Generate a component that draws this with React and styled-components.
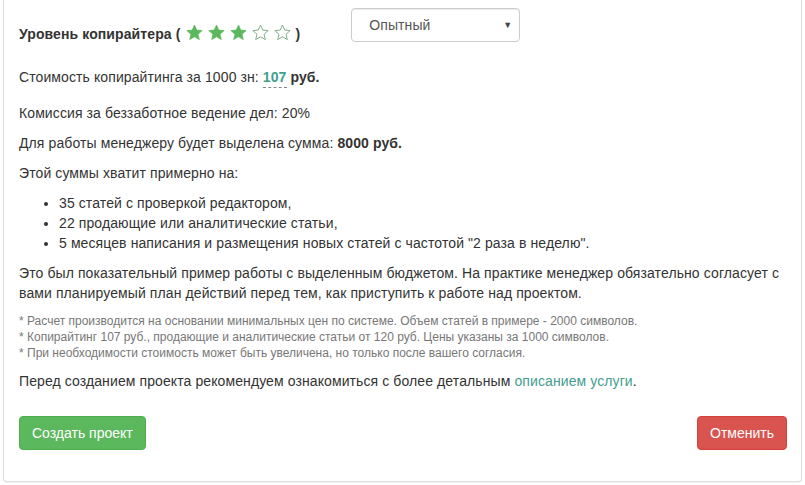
import React from "react";
import styled, { createGlobalStyle } from "styled-components";

const Global = createGlobalStyle`
  html, body { margin: 0; padding: 0; background: #fff; }
  body { font-family: "Liberation Sans", Arial, sans-serif; font-size: 14px; line-height: 20px; color: #333; letter-spacing: 0.1px; }
  * { box-sizing: border-box; }
`;

const Panel = styled.div`
  margin: 0 4px 4px 3px;
  width: 799px;
  border: 1px solid #ddd;
  border-top: 0;
  border-radius: 0 0 4px 4px;
  box-shadow: 0 1px 1px rgba(0,0,0,0.05);
  padding: 8px 14px 31px 15px;
`;

const Header = styled.div`
  display: flex;
  align-items: flex-start;
  gap: 51px;
  margin-bottom: 23px;
`;

const Title = styled.div`
  font-weight: bold;
  padding-top: 16px;
  display: flex;
  align-items: center;
  white-space: nowrap;
`;

const Stars = styled.span`
  display: inline-flex;
  gap: 5px;
  margin: 0 4px 0 6px;
  position: relative;
  top: -2px;
`;

const SelectBox = styled.div`
  width: 169px;
  height: 34px;
  border: 1px solid #ccc;
  border-radius: 4px;
  box-shadow: inset 0 1px 1px rgba(0,0,0,0.075);
  display: flex;
  align-items: center;
  justify-content: space-between;
  padding: 0 7px 0 17px;
  color: #555;
  font-size: 14px;
`;

const Caret = styled.span`
  font-size: 9px;
  color: #444;
`;

const P = styled.p`
  margin: 0 0 ${p => p.$mb ?? 10}px;
`;

const Price = styled.span`
  font-weight: bold;
  color: #3f9e8e;
  border-bottom: 1px dashed #888;
  padding-bottom: 2px;
`;

const List = styled.ul`
  margin: 0 0 10px;
  padding-left: 40px;
  list-style: disc;
`;

const Notes = styled.div`
  font-size: 12px;
  line-height: 16px;
  color: #777;
  letter-spacing: 0;
  margin: 0 0 10px;
`;

const Link = styled.a`
  color: #3f9e8e;
  text-decoration: none;
`;

const Actions = styled.div`
  display: flex;
  justify-content: space-between;
  margin-top: 25px;
`;

const Button = styled.button`
  font-family: "Liberation Sans", Arial, sans-serif;
  font-size: 14px;
  line-height: 20px;
  padding: 6px 12px;
  height: 34px;
  border-radius: 4px;
  border: 1px solid ${p => (p.$kind === "danger" ? "#d43f3a" : "#4cae4c")};
  background: ${p => (p.$kind === "danger" ? "#d9534f" : "#5cb85c")};
  color: #fff;
  cursor: pointer;
`;

const Star = ({ filled }) => (
  <svg width="17" height="17" viewBox="0 0 24 24">
    <path
      d="M12 1.5l3.2 7.1 7.6.7-5.8 5.1 1.8 7.6L12 18l-6.8 4 1.8-7.6L1.2 9.3l7.6-.7z"
      fill={filled ? "#5cb85c" : "none"}
      stroke={filled ? "#5cb85c" : "#7fae86"}
      strokeWidth={filled ? 1 : 1.4}
      strokeLinejoin="round"
    />
  </svg>
);

export default function App() {
  return (
    <>
      <Global />
      <Panel>
        <Header>
          <Title>
            Уровень копирайтера (
            <Stars>
              {[1, 2, 3, 4, 5].map(i => (
                <Star key={i} filled={i <= 3} />
              ))}
            </Stars>
            )
          </Title>
          <SelectBox>
            <span>Опытный</span>
            <Caret>▼</Caret>
          </SelectBox>
        </Header>
        <P $mb={16}>
          Стоимость копирайтинга за 1000 зн: <Price>107</Price> <b>руб.</b>
        </P>
        <P>Комиссия за беззаботное ведение дел: 20%</P>
        <P>
          Для работы менеджеру будет выделена сумма: <b>8000 руб.</b>
        </P>
        <P>Этой суммы хватит примерно на:</P>
        <List>
          <li>35 статей с проверкой редактором,</li>
          <li>22 продающие или аналитические статьи,</li>
          <li>5 месяцев написания и размещения новых статей с частотой "2 раза в неделю".</li>
        </List>
        <P>
          Это был показательный пример работы с выделенным бюджетом. На практике менеджер обязательно согласует с
          вами планируемый план действий перед тем, как приступить к работе над проектом.
        </P>
        <Notes>
          * Расчет производится на основании минимальных цен по системе. Объем статей в примере - 2000 символов.
          <br />* Копирайтинг 107 руб., продающие и аналитические статьи от 120 руб. Цены указаны за 1000 символов.
          <br />* При необходимости стоимость может быть увеличена, но только после вашего согласия.
        </Notes>
        <P $mb={0}>
          Перед созданием проекта рекомендуем ознакомиться с более детальным <Link href="#">описанием услуги</Link>.
        </P>
        <Actions>
          <Button $kind="success">Создать проект</Button>
          <Button $kind="danger">Отменить</Button>
        </Actions>
      </Panel>
    </>
  );
}
